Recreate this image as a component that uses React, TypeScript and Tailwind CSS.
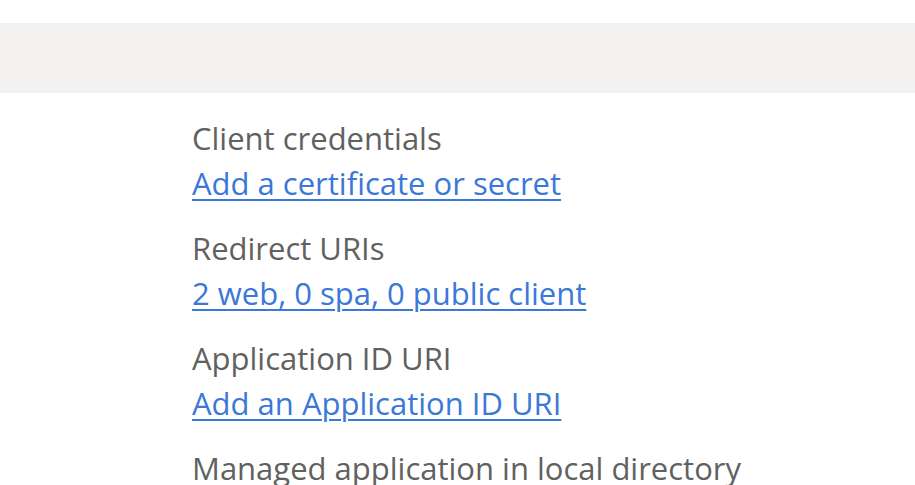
const items = [
  { label: "Client credentials", link: "Add a certificate or secret" },
  { label: "Redirect URIs", link: "2 web, 0 spa, 0 public client" },
  { label: "Application ID URI", link: "Add an Application ID URI" },
  { label: "Managed application in local directory", link: "" },
];

export default function App() {
  return (
    <div className="h-[485px] w-[915px] overflow-hidden bg-white font-['Open_Sans',sans-serif]">
      <div className="h-[23px]" />
      <div className="h-[70px] bg-[#f3f2f1]" />
      <div className="flex flex-col gap-[20px] pl-[192px] pt-[23px] text-[31px] leading-[45px]">
        {items.map((it) => (
          <div key={it.label} className="flex flex-col">
            <div className="whitespace-nowrap text-[#616161]">{it.label}</div>
            {it.link && (
              <a
                href="#"
                className="w-fit whitespace-nowrap text-[#3b78d8] underline decoration-2 underline-offset-[4px]"
              >
                {it.link}
              </a>
            )}
          </div>
        ))}
      </div>
    </div>
  );
}
